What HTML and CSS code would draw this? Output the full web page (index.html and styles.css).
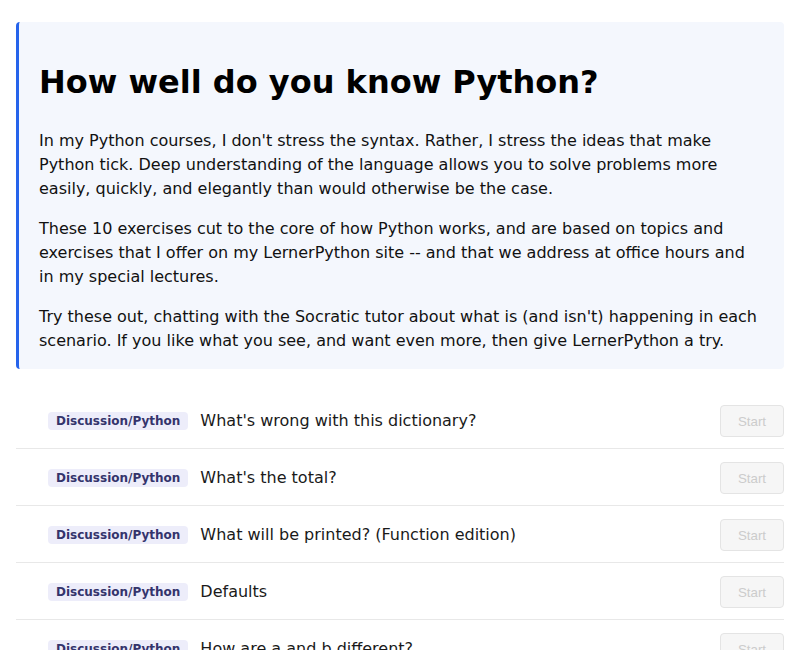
FILE: index.html
```html
<!DOCTYPE html>
<html>
<head>
<meta charset="utf-8">
<link rel="stylesheet" href="styles.css">
</head>
<body>
<div class="page">
  <section class="intro">
    <h1>How well do you know Python?</h1>
    <p>In my Python courses, I don't stress the syntax. Rather, I stress the ideas that make Python tick. Deep understanding of the language allows you to solve problems more easily, quickly, and elegantly than would otherwise be the case.</p>
    <p>These 10 exercises cut to the core of how Python works, and are based on topics and exercises that I offer on my LernerPython site -- and that we address at office hours and in my special lectures.</p>
    <p>Try these out, chatting with the Socratic tutor about what is (and isn't) happening in each scenario. If you like what you see, and want even more, then give LernerPython a try.</p>
  </section>
  <ul class="list">
    <li class="row"><span class="badge">Discussion/Python</span><span class="title">What's wrong with this dictionary?</span><button class="start" disabled>Start</button></li>
    <li class="row"><span class="badge">Discussion/Python</span><span class="title">What's the total?</span><button class="start" disabled>Start</button></li>
    <li class="row"><span class="badge">Discussion/Python</span><span class="title">What will be printed? (Function edition)</span><button class="start" disabled>Start</button></li>
    <li class="row"><span class="badge">Discussion/Python</span><span class="title">Defaults</span><button class="start" disabled>Start</button></li>
    <li class="row"><span class="badge">Discussion/Python</span><span class="title">How are a and b different?</span><button class="start" disabled>Start</button></li>
  </ul>
</div>
</body>
</html>
```
FILE: styles.css
```css
html, body {
  margin: 0;
  padding: 0;
  background: #ffffff;
}
body {
  font-family: "DejaVu Sans", sans-serif;
  color: #111111;
}
.page {
  padding: 22px 16px 0 16px;
}
.intro {
  background: #f4f7fd;
  border-left: 3px solid #2563eb;
  border-radius: 4px;
  padding: 20px 24px 16px 20px;
}
.intro h1 {
  font-size: 32px;
  font-weight: bold;
  line-height: 38px;
  margin: 21px 0 28px 0;
  color: #000000;
}
.intro p {
  font-size: 16px;
  line-height: 24px;
  margin: 0 0 16px 0;
}
.intro p:last-child {
  margin-bottom: 0;
}
.list {
  list-style: none;
  margin: 23px 0 0 0;
  padding: 0;
}
.row {
  display: flex;
  align-items: center;
  padding: 13px 0 11px 32px;
  border-bottom: 1px solid #e8e8e8;
}
.badge {
  font-size: 12px;
  font-weight: bold;
  line-height: 14px;
  padding: 2px 8px;
  border-radius: 4px;
  background: #ededfa;
  color: #34346c;
}
.title {
  flex: 1;
  margin-left: 12px;
  font-size: 16px;
  line-height: 20px;
  color: #1a1a1a;
}
.start {
  font-family: "Liberation Sans", Arial, sans-serif;
  font-size: 13.33px;
  width: 64px;
  height: 32px;
  padding: 0;
  border: 1px solid #e4e4e4;
  border-radius: 4px;
  background: #f6f6f6;
  color: #cccccc;
}
```
